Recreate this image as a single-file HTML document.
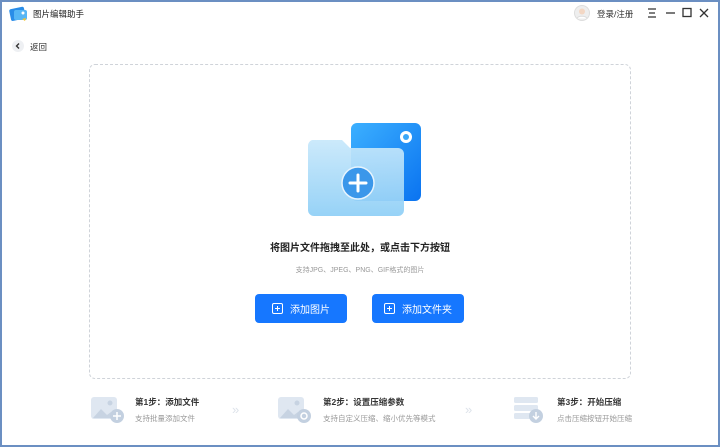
<!DOCTYPE html>
<html><head><meta charset="utf-8"><style>
*{margin:0;padding:0;box-sizing:border-box}
body{width:720px;height:447px;overflow:hidden;background:#6b8fc2;font-family:"Liberation Sans","Noto Sans CJK SC",sans-serif;position:relative}
#win{position:absolute;left:2px;top:2px;width:716px;height:443px;background:#fff}
.a{position:absolute}
.t{white-space:nowrap}
.btn{position:absolute;height:29px;background:#1677ff;border-radius:4px;color:#fff;font-size:10px;display:flex;align-items:center;justify-content:center;gap:7px}
.ic{width:11px;height:11px;border:1.2px solid #fff;border-radius:2px;position:relative}
.ic:before{content:"";position:absolute;left:2px;top:3.7px;width:4.6px;height:1.2px;background:#fff}
.ic:after{content:"";position:absolute;left:3.7px;top:2px;width:1.2px;height:4.6px;background:#fff}
.st{font-size:8.5px;font-weight:bold;color:#333}
.sd{font-size:7.5px;color:#999}
</style></head><body><div id="win">
<svg class="a" style="left:7px;top:3px" width="20" height="18" viewBox="0 0 20 18"><rect x="1" y="3" width="15" height="12" rx="2" fill="#2a8de8" transform="rotate(-12 8 9)"/><rect x="5" y="5" width="13" height="10" rx="2" fill="#56b6f5"/><circle cx="14" cy="8" r="1.5" fill="#fff"/><path d="M13 14l3 2 1-3z" fill="#f4c430"/></svg>
<div class="a t" style="left:31px;top:6px;font-size:8.5px;color:#222">图片编辑助手</div>
<svg class="a" style="left:572px;top:3px" width="16" height="16" viewBox="0 0 16 16"><circle cx="8" cy="8" r="7.5" fill="#eee" stroke="#ddd"/><circle cx="8" cy="6.5" r="3" fill="#f3d7c4"/><path d="M3 13.5c1-3 9-3 10 0" fill="#fff" stroke="#ddd"/></svg>
<div class="a t" style="left:595px;top:6px;font-size:8.5px;color:#333">登录/注册</div>
<svg class="a" style="left:644px;top:5px" width="70" height="12" viewBox="0 0 70 12" stroke="#333" stroke-width="1.3" fill="none"><path d="M2 2h8M3 6h6M2 10h8"/><path d="M20 6h9"/><rect x="37" y="1.5" width="8" height="8"/><path d="M54 2l8 8M62 2l-8 8"/></svg>
<svg class="a" style="left:10px;top:38px" width="12" height="12" viewBox="0 0 12 12"><circle cx="6" cy="6" r="6" fill="#eef0f3"/><path d="M7 3.5L4.5 6 7 8.5" stroke="#333" stroke-width="1.4" fill="none"/></svg>
<div class="a t" style="left:28px;top:39px;font-size:8.5px;color:#333">返回</div>
<div class="a" style="left:87px;top:62px;width:542px;height:315px;border:1.3px dashed #cfd3d9;border-radius:6px"></div>
<svg class="a" style="left:304px;top:119px" width="116" height="98" viewBox="0 0 116 98">
<defs><linearGradient id="g1" x1="0" y1="0" x2="1" y2="1"><stop offset="0" stop-color="#3cb0ff"/><stop offset="1" stop-color="#0a73f0"/></linearGradient>
<linearGradient id="g2" x1="0" y1="0" x2="0" y2="1"><stop offset="0" stop-color="#c8e8fb"/><stop offset="1" stop-color="#8fcff6"/></linearGradient></defs>
<rect x="45" y="2" width="70" height="78" rx="6" fill="url(#g1)"/>
<circle cx="100" cy="16" r="6" fill="#fff"/><circle cx="100" cy="16" r="3" fill="#3aa7f8"/>
<path d="M6 19h30l8 8h48a6 6 0 0 1 6 6v56a6 6 0 0 1-6 6H8a6 6 0 0 1-6-6V25a6 6 0 0 1 4-6z" fill="url(#g2)" opacity=".93"/>
<circle cx="52" cy="62" r="16" fill="#3b97ea" stroke="#e6f4fe" stroke-width="1.5"/>
<path d="M52 54v16M44 62h16" stroke="#fff" stroke-width="3" stroke-linecap="round"/></svg>
<div class="a t" style="left:0;width:716px;text-align:center;top:237px;font-size:10px;font-weight:bold;color:#222">将图片文件拖拽至此处，或点击下方按钮</div>
<div class="a t" style="left:0;width:716px;text-align:center;top:263px;font-size:7px;color:#999">支持JPG、JPEG、PNG、GIF格式的图片</div>
<div class="btn" style="left:253px;top:292px;width:92px"><span class="ic"></span>添加图片</div>
<div class="btn" style="left:370px;top:292px;width:92px"><span class="ic"></span>添加文件夹</div>
<svg class="a" style="left:88px;top:394px" width="34" height="28" viewBox="0 0 34 28"><rect x="1" y="1" width="26" height="22" rx="3" fill="#dfe7f1"/><path d="M3 22l8-9 6 6 4-3 6 6z" fill="#c7d3e2"/><circle cx="20" cy="7" r="2.5" fill="#c7d3e2"/><circle cx="27" cy="20" r="7" fill="#c3d0e0"/><path d="M27 16v8M23 20h8" stroke="#fff" stroke-width="1.5"/></svg>
<div class="a t st" style="left:133px;top:394px">第1步：添加文件</div>
<div class="a t sd" style="left:133px;top:411px">支持批量添加文件</div>
<div class="a t" style="left:230px;top:400px;font-size:13px;color:#dde3ea">»</div>
<svg class="a" style="left:275px;top:394px" width="34" height="28" viewBox="0 0 34 28"><rect x="1" y="1" width="26" height="22" rx="3" fill="#dfe7f1"/><path d="M3 22l8-9 6 6 4-3 6 6z" fill="#c7d3e2"/><circle cx="20" cy="7" r="2.5" fill="#c7d3e2"/><circle cx="27" cy="20" r="7" fill="#c3d0e0"/><circle cx="27" cy="20" r="3" fill="none" stroke="#fff" stroke-width="1.5"/></svg>
<div class="a t st" style="left:321px;top:394px">第2步：设置压缩参数</div>
<div class="a t sd" style="left:321px;top:411px">支持自定义压缩、缩小优先等模式</div>
<div class="a t" style="left:463px;top:400px;font-size:13px;color:#dde3ea">»</div>
<svg class="a" style="left:510px;top:394px" width="34" height="28" viewBox="0 0 34 28"><rect x="2" y="1" width="24" height="6" rx="1.5" fill="#dfe7f1"/><rect x="2" y="9" width="24" height="6" rx="1.5" fill="#dfe7f1"/><rect x="2" y="17" width="24" height="6" rx="1.5" fill="#dfe7f1"/><circle cx="24" cy="20" r="7" fill="#c3d0e0"/><path d="M24 16v7M21 20l3 3 3-3" stroke="#fff" stroke-width="1.4" fill="none"/></svg>
<div class="a t st" style="left:555px;top:394px">第3步：开始压缩</div>
<div class="a t sd" style="left:555px;top:411px">点击压缩按钮开始压缩</div>
</div></body></html>
